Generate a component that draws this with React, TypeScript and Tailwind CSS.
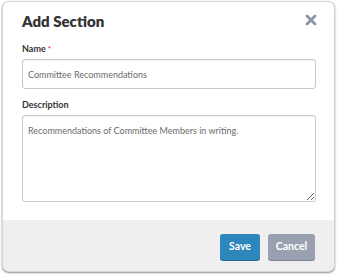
export default function App() {
  return (
    <div className="w-[338px] h-[275px] bg-white" style={{ fontFamily: 'Lato, "Open Sans", sans-serif' }}>
      <div className="relative ml-[2px] mt-[1px] w-[333px] h-[271px] rounded-[7px] border border-[#d4d4d4] bg-white overflow-hidden shadow-[0_1px_2px_rgba(0,0,0,0.45)] flex flex-col">
        {/* header */}
        <div className="flex items-start justify-between pl-[19px] pr-[17px] pt-[9px]">
          <h2 className="text-[15px] font-extrabold text-[#333] leading-[20px]">Add Section</h2>
          <button className="mt-[3px] text-[#8b95a5]" aria-label="Close">
            <svg width="12" height="12" viewBox="0 0 12 12">
              <path d="M2 2 L10 10 M10 2 L2 10" stroke="currentColor" strokeWidth="2.8" strokeLinecap="round" />
            </svg>
          </button>
        </div>

        {/* body */}
        <div className="px-[19px] pt-[12px] flex-1">
          <label className="block text-[9px] font-bold text-[#333] leading-[12px]">
            Name<span className="text-[#e53935] align-top text-[8px] ml-[2px]">*</span>
          </label>
          <input
            className="mt-[4px] block w-[294px] h-[30px] rounded-[3px] border border-[#c9c9c9] px-[5px] text-[9px] text-[#6b6b6b] outline-none shadow-[inset_0_1px_1px_rgba(0,0,0,0.06)]"
            defaultValue="Committee Recommendations"
          />
          <label className="mt-[10px] block text-[9px] font-bold text-[#333] leading-[12px]">Description</label>
          <textarea
            className="mt-[4px] block w-[294px] h-[87px] rounded-[3px] border border-[#c9c9c9] px-[5px] py-[7px] text-[9px] text-[#6b6b6b] outline-none resize-y leading-[15px] shadow-[inset_0_1px_1px_rgba(0,0,0,0.06)]"
            defaultValue="Recommendations of Committee Members in writing."
          />
        </div>

        {/* footer */}
        <div className="h-[51px] bg-[#efefef] flex items-center justify-end gap-[8px] pr-[19px] pt-[3px]">
          <button className="h-[26px] w-[40px] rounded-[3px] bg-[#2e87bb] text-white text-[10.5px] font-bold shadow-[0_1px_0_#1f6a94]">
            Save
          </button>
          <button className="h-[26px] w-[47px] rounded-[3px] bg-[#99a1b0] text-white text-[10.5px] font-bold shadow-[0_1px_0_#7d8594]">
            Cancel
          </button>
        </div>
      </div>
    </div>
  )
}
